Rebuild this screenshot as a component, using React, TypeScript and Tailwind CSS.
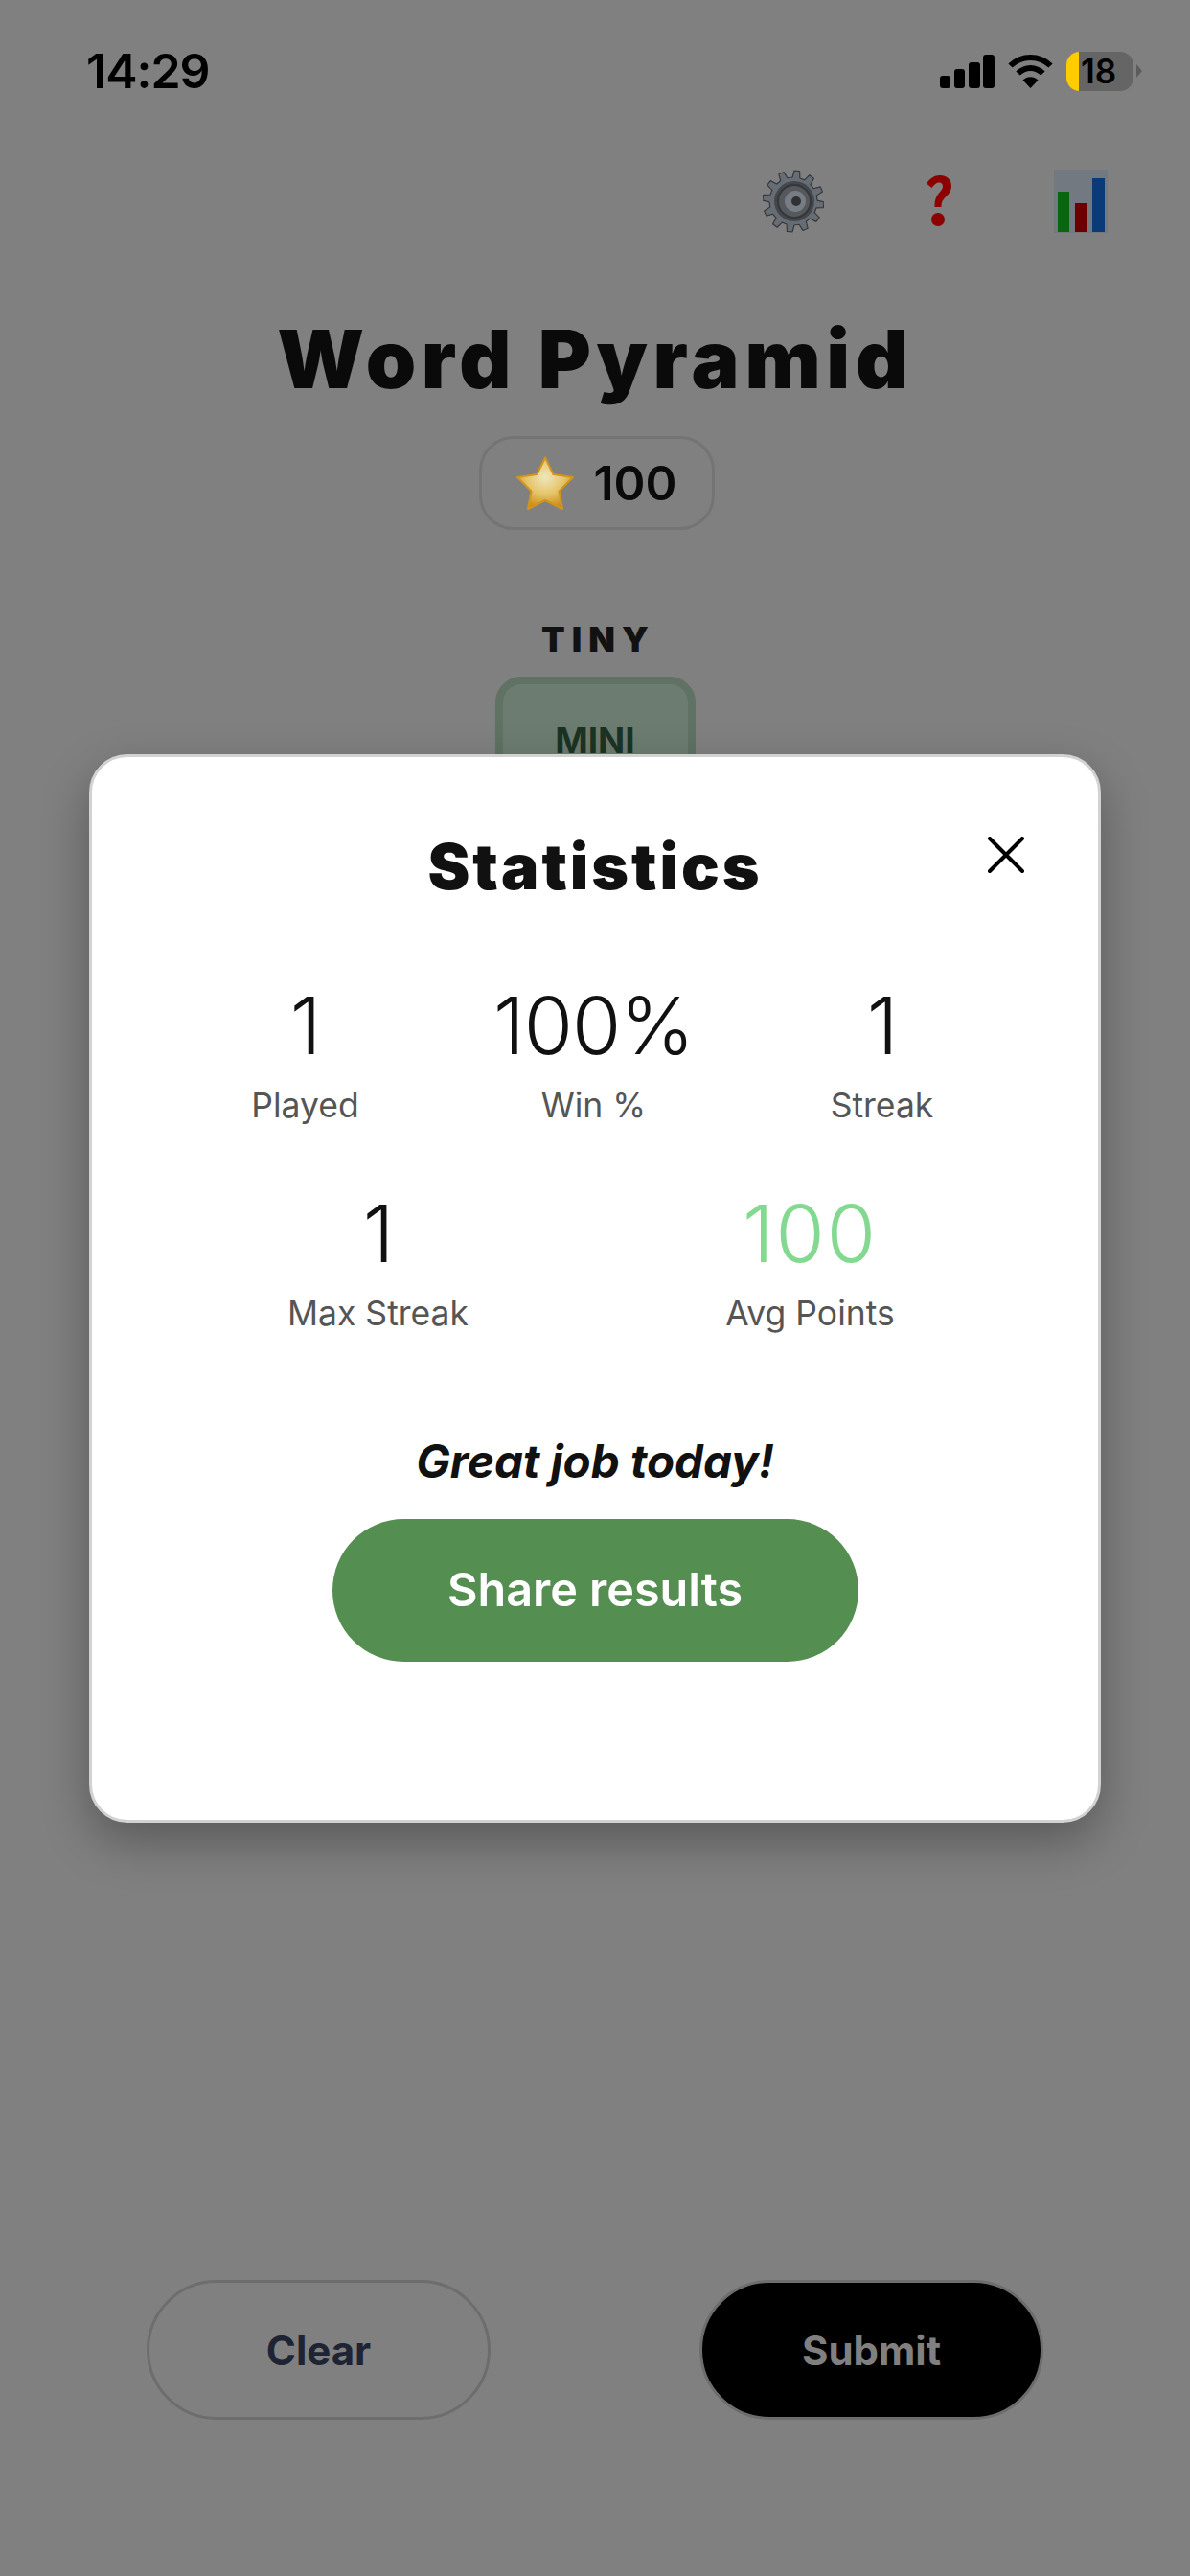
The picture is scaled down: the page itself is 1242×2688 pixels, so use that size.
import React from 'react';

const FONT = 'font-["Inter",sans-serif]';

function gearPath(cx: number, cy: number, outer: number, inner: number, teeth: number) {
  const step = (Math.PI * 2) / teeth;
  const pts: string[] = [];
  for (let i = 0; i < teeth; i++) {
    const a = i * step - Math.PI / 2 + 0.12;
    const corners: [number, number][] = [
      [inner, a - step * 0.3],
      [outer, a - step * 0.17],
      [outer, a + step * 0.17],
      [inner, a + step * 0.3],
    ];
    corners.forEach(([r, t]) => {
      pts.push(`${(cx + r * Math.cos(t)).toFixed(2)} ${(cy + r * Math.sin(t)).toFixed(2)}`);
    });
  }
  return `M${pts.join('L')}Z`;
}

function GearIcon() {
  return (
    <svg width="64" height="66" viewBox="0 0 64 66">
      <path d={gearPath(32, 33, 32, 25, 12)} fill="#666d74" stroke="#36393c" strokeWidth="1.2" strokeLinejoin="round" />
      <circle cx="33" cy="33" r="21" fill="#44474b" />
      <circle cx="33" cy="33" r="17" fill="#55585c" stroke="#35373a" strokeWidth="2" />
      <circle cx="34" cy="33" r="11" fill="#767d84" />
      <circle cx="35" cy="33" r="5" fill="#303133" />
    </svg>
  );
}

function QuestionIcon() {
  return (
    <svg width="26" height="54" viewBox="0 0 26 54">
      <path
        d="M0 8.500C4 3 8 0 14 0c7 0 12 4 12 11 0 5-2.500 8-6 11.500-3 3-4.500 5-4.500 10.500H8.500c0-7 1-10.500 4.500-14.500 2.500-3 4-4.500 4-7 0-2.500-1.500-4-4-4-2.500 0-5 2-7.500 5.500Z"
        fill="#8c0000"
      />
      <circle cx="12" cy="46" r="7" fill="#8c0000" />
    </svg>
  );
}

function ChartIcon() {
  return (
    <svg width="56" height="66" viewBox="0 0 56 66">
      <rect width="56" height="66" fill="#737980" />
      <rect x="4" y="23" width="12" height="42" fill="#07660f" />
      <rect x="22" y="35" width="12" height="30" fill="#6c0000" />
      <rect x="40" y="9" width="13" height="56" fill="#0a3a78" />
    </svg>
  );
}

function StarIcon() {
  return (
    <svg width="60" height="56" viewBox="0 0 60 56">
      <defs>
        <radialGradient id="star" cx="50%" cy="38%" r="62%">
          <stop offset="0%" stopColor="#efe6bd" />
          <stop offset="55%" stopColor="#e5c468" />
          <stop offset="100%" stopColor="#c98a14" />
        </radialGradient>
      </defs>
      <path
        d="M30 1.500 38.500 19 59 22 44.500 36.500 48 55 30 46 12 55 15.500 36.500 1 22 21.500 19Z"
        fill="url(#star)"
        stroke="#d2941c"
        strokeWidth="2"
        strokeLinejoin="round"
      />
    </svg>
  );
}

function SignalIcon() {
  return (
    <svg width="57" height="35" viewBox="0 0 57 35" fill="#000">
      <rect x="0" y="22" width="11" height="13" rx="3" />
      <rect x="15" y="15" width="11" height="20" rx="3" />
      <rect x="30" y="8" width="12" height="27" rx="3" />
      <rect x="45" y="0" width="12" height="35" rx="3" />
    </svg>
  );
}

function WifiIcon() {
  return (
    <svg width="47" height="36" viewBox="0 0 47 36" fill="none" stroke="#000" strokeWidth="6">
      <path d="M2.500 12.500C14 1 33 1 44.500 12.500" />
      <path d="M10.500 20.500C18 13 29 13 36.500 20.500" />
      <path d="M23.500 36 15.500 27.500C20 23 27 23 31.500 27.500Z" fill="#000" stroke="none" />
    </svg>
  );
}

function Battery() {
  return (
    <div className="flex items-center gap-[3px]">
      <div className="flex h-[41px] w-[70px] overflow-hidden rounded-[14px]">
        <div className="w-[13px] bg-[#ffcc00]" />
        <div className="flex flex-1 items-center bg-[#656565] pl-[2px] text-[35px] leading-[41px] font-semibold text-black">
          18
        </div>
      </div>
      <svg width="6" height="14" viewBox="0 0 6 14">
        <path d="M0 0 6 7 0 14Z" fill="#5c5c5c" />
      </svg>
    </div>
  );
}

function Stat({ value, label, green }: { value: string; label: string; green?: boolean }) {
  return (
    <div className="flex flex-col items-center">
      <div
        className={`text-[83px] leading-[90px] font-light ${green ? 'tracking-[2px] text-[#83d98f]' : 'tracking-[-1px] text-[#111111]'}`}
      >
        {value}
      </div>
      <div className="mt-[19px] text-[35.5px] leading-[40px] text-[#555555]">{label}</div>
    </div>
  );
}

export default function App() {
  return (
    <div className={`relative flex h-[2688px] w-[1242px] flex-col overflow-hidden bg-[#808080] ${FONT}`}>
      {/* status bar */}
      <div className="mt-[49px] flex h-[50px] items-center justify-between pr-[50px] pl-[90px]">
        <div className="text-[50px] leading-[50px] font-semibold tracking-[-1px] text-black">14:29</div>
        <div className="flex items-center gap-[14px]">
          <SignalIcon />
          <WifiIcon />
          <Battery />
        </div>
      </div>

      {/* toolbar */}
      <div className="mt-[78px] flex h-[66px] items-center justify-end gap-[107px] pr-[86px]">
        <GearIcon />
        <QuestionIcon />
        <ChartIcon />
      </div>

      <h1 className="mt-[87px] text-center text-[84px] leading-[90px] font-black tracking-[5.7px] text-[#0a0a0a]">
        Word Pyramid
      </h1>

      <div className="mt-[35px] ml-[500px] flex h-[98px] w-[246px] items-center justify-center gap-[20px] rounded-[36px] border-[3px] border-[#747474]">
        <StarIcon />
        <span className="text-[50px] leading-none font-semibold text-[#0a0a0a]">100</span>
      </div>

      <div className="mt-[94px] pl-[7px] text-center text-[36px] leading-[40px] font-black tracking-[7px] text-[#121212]">
        TINY
      </div>

      <div className="mx-auto mt-[19px] flex h-[134px] w-[209px] items-center justify-center rounded-[27px] border-[8px] border-[#5f7263] bg-[#6d7c70] text-[37px] font-bold text-[#1c3324]">
        MINI
      </div>

      {/* bottom actions */}
      <div className="mt-auto mb-[163px] flex justify-between pr-[153px] pl-[153px]">
        <button className="h-[146px] w-[359px] rounded-full border-[3px] border-[#6d6d6d] text-[42px] font-bold text-[#1e2433]">
          Clear
        </button>
        <button className="h-[146px] w-[359px] rounded-full border-[3px] border-[#6d6d6d] bg-black text-[42px] font-bold text-[#808080]">
          Submit
        </button>
      </div>

      {/* statistics modal */}
      <div className="absolute top-[787px] left-[93px] h-[1115px] w-[1056px] rounded-[40px] border-[3px] border-[#d2d2d2] bg-white pt-[79px] shadow-[0_20px_50px_rgba(0,0,0,0.3)]">
        <button className="absolute top-[83px] right-[77px]">
          <svg width="38" height="38" viewBox="0 0 38 38" stroke="#000" strokeWidth="4" strokeLinecap="round">
            <path d="M2 2 36 36M36 2 2 36" />
          </svg>
        </button>

        <h2 className="text-center text-[66px] leading-[70px] font-black tracking-[3px] text-[#111111]">
          Statistics
        </h2>

        <div className="mt-[86px] ml-[72px] grid w-[903px] grid-cols-3">
          <Stat value="1" label="Played" />
          <Stat value="100%" label="Win %" />
          <Stat value="1" label="Streak" />
        </div>

        <div className="mt-[68px] ml-[73px] grid w-[902px] grid-cols-2">
          <Stat value="1" label="Max Streak" />
          <Stat value="100" label="Avg Points" green />
        </div>

        <p className="mt-[109px] text-center text-[47.5px] leading-[50px] font-bold text-[#111111] italic">
          Great job today!
        </p>

        <button className="mx-auto mt-[35px] block h-[149px] w-[549px] rounded-full bg-[#548e50] text-[48.5px] font-semibold text-white">
          Share results
        </button>
      </div>
    </div>
  );
}
